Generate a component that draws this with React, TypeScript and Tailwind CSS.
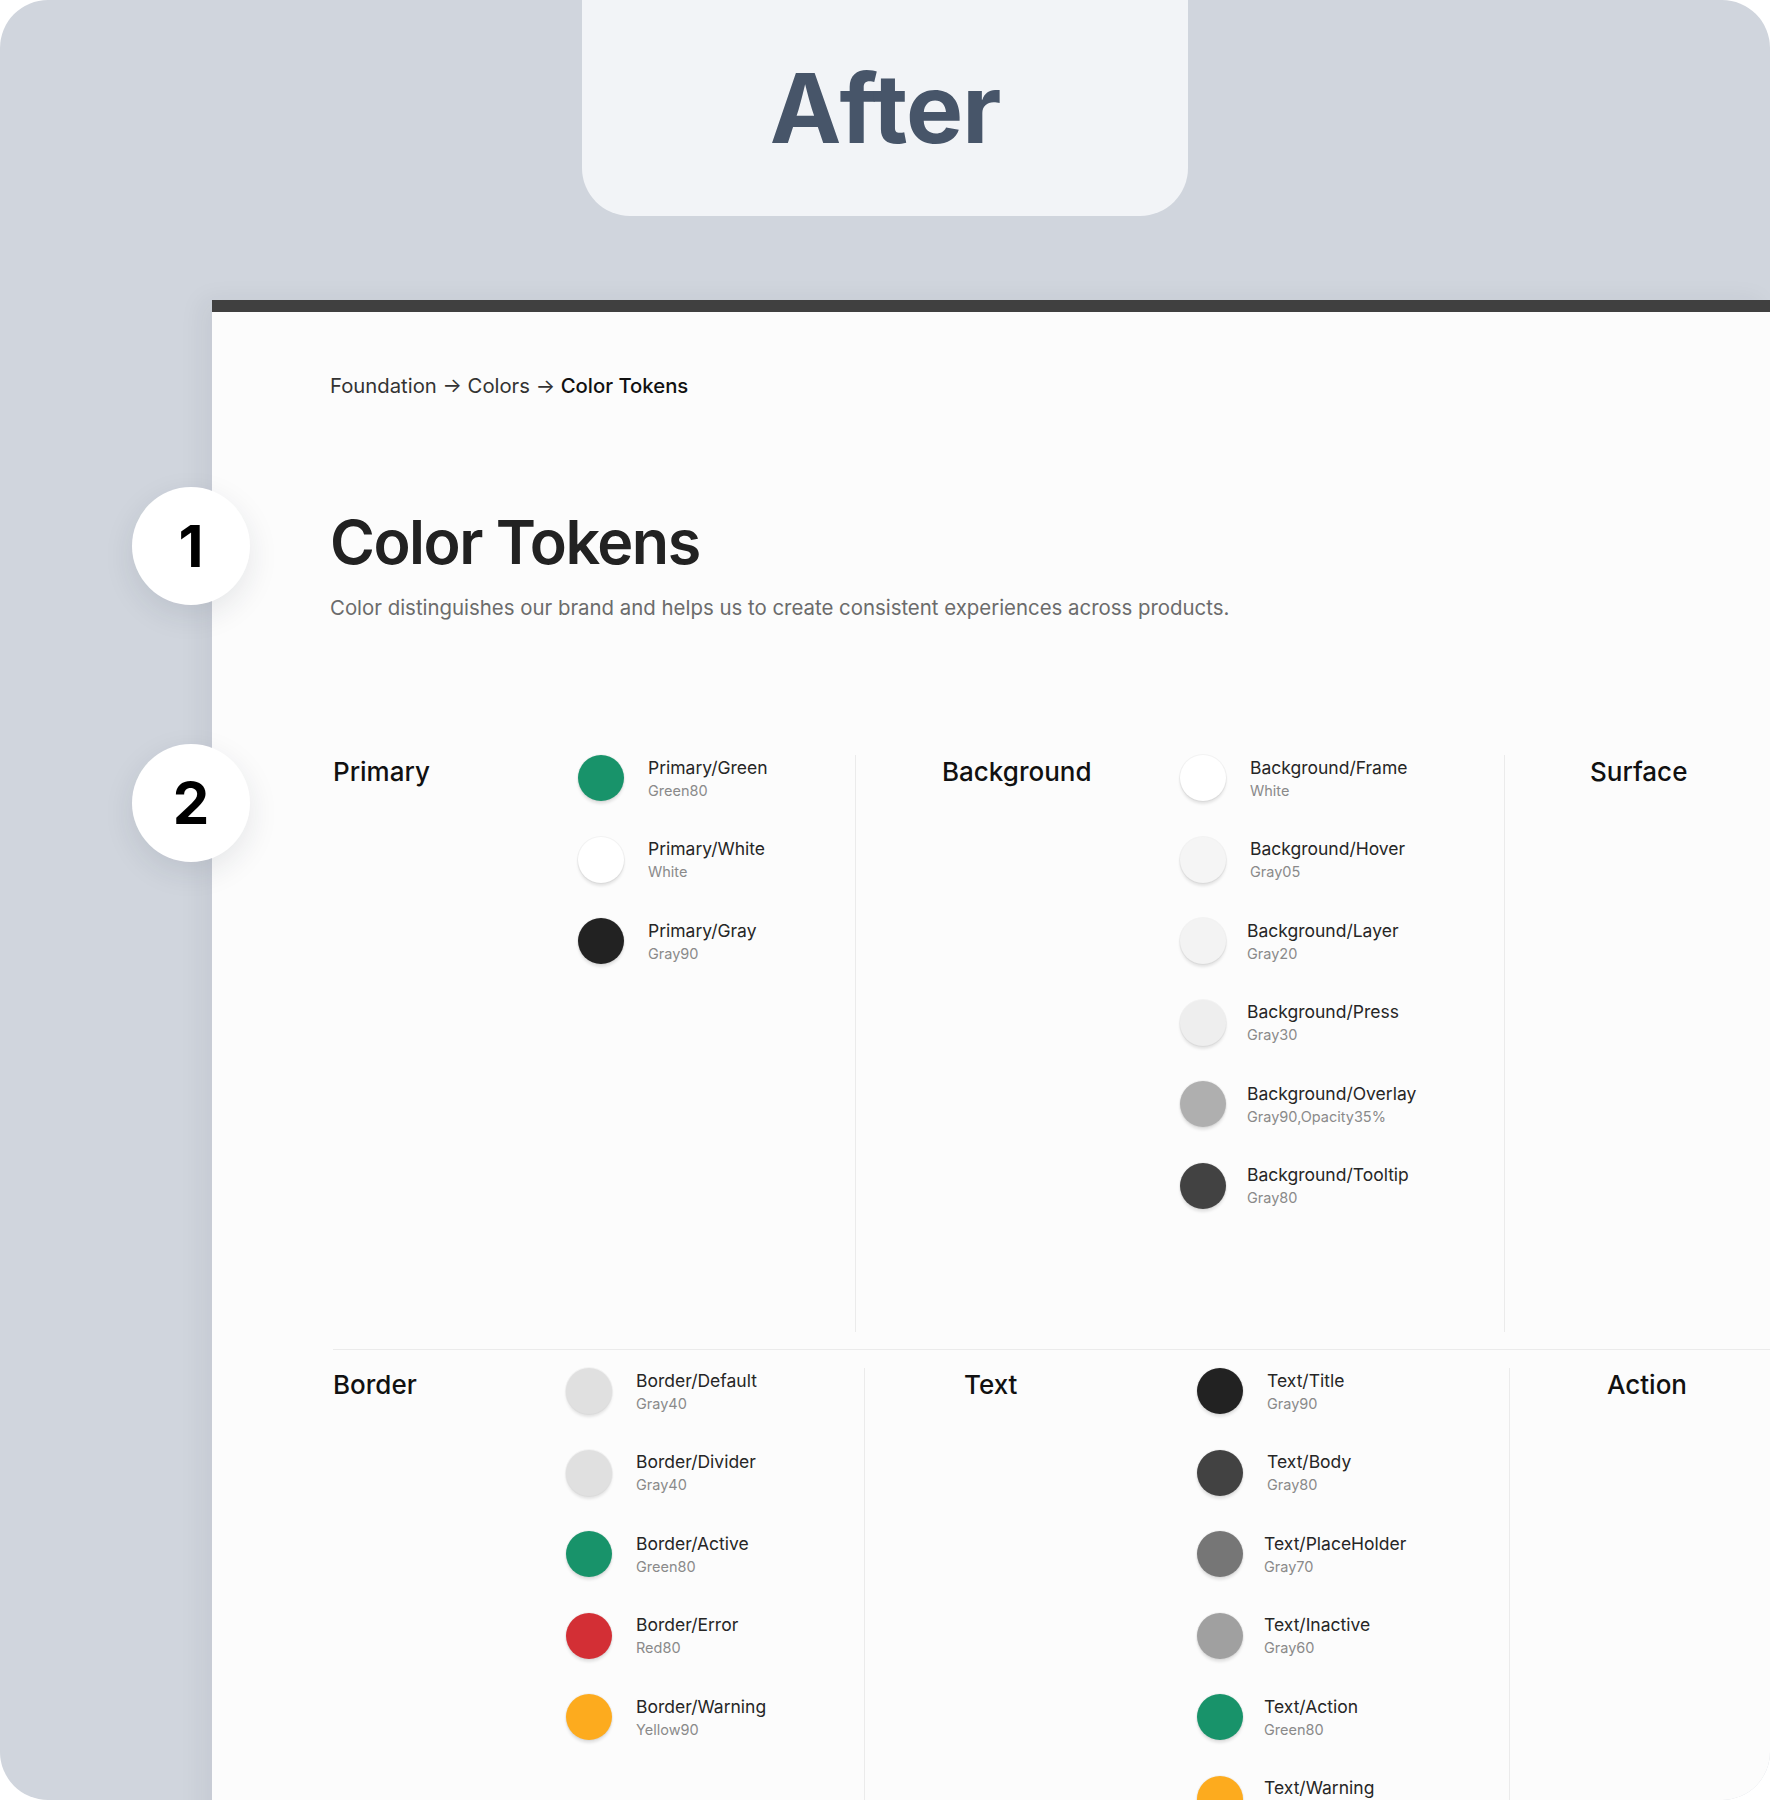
type Token = { name: string; value: string; color: string; gap?: string };

const primary: Token[] = [
  { name: 'Primary/Green', value: 'Green80', color: 'bg-[#18936a]' },
  { name: 'Primary/White', value: 'White', color: 'bg-white' },
  { name: 'Primary/Gray', value: 'Gray90', color: 'bg-[#222222]' },
];

const background: Token[] = [
  { name: 'Background/Frame', value: 'White', color: 'bg-white' },
  { name: 'Background/Hover', value: 'Gray05', color: 'bg-[#f5f5f5]' },
  { name: 'Background/Layer', value: 'Gray20', color: 'bg-[#f3f3f3]', gap: 'gap-[21px]' },
  { name: 'Background/Press', value: 'Gray30', color: 'bg-[#eeeeee]', gap: 'gap-[21px]' },
  { name: 'Background/Overlay', value: 'Gray90,Opacity35%', color: 'bg-[#afafaf]', gap: 'gap-[21px]' },
  { name: 'Background/Tooltip', value: 'Gray80', color: 'bg-[#424242]', gap: 'gap-[21px]' },
];

const border: Token[] = [
  { name: 'Border/Default', value: 'Gray40', color: 'bg-[#e0e0e0]' },
  { name: 'Border/Divider', value: 'Gray40', color: 'bg-[#e0e0e0]' },
  { name: 'Border/Active', value: 'Green80', color: 'bg-[#18936a]' },
  { name: 'Border/Error', value: 'Red80', color: 'bg-[#d32f35]' },
  { name: 'Border/Warning', value: 'Yellow90', color: 'bg-[#fdab1e]' },
];

const text: Token[] = [
  { name: 'Text/Title', value: 'Gray90', color: 'bg-[#222222]' },
  { name: 'Text/Body', value: 'Gray80', color: 'bg-[#424242]' },
  { name: 'Text/PlaceHolder', value: 'Gray70', color: 'bg-[#767676]', gap: 'gap-[21px]' },
  { name: 'Text/Inactive', value: 'Gray60', color: 'bg-[#a0a0a0]', gap: 'gap-[21px]' },
  { name: 'Text/Action', value: 'Green80', color: 'bg-[#18936a]', gap: 'gap-[21px]' },
  { name: 'Text/Warning', value: 'Yellow90', color: 'bg-[#fdab1e]', gap: 'gap-[21px]' },
];

function Swatch({ t }: { t: Token }) {
  return (
    <div className={`flex h-[46px] items-center ${t.gap ?? 'gap-6'}`}>
      <div
        className={`h-[46px] w-[46px] shrink-0 rounded-full ${t.color} shadow-[0_0_0_1px_rgba(0,0,0,0.04),0_3px_3px_rgba(0,0,0,0.1)]`}
      />
      <div className="flex flex-col gap-[2px] pt-[1px]">
        <span className="text-[17.5px] leading-[22px] text-[#262626]">{t.name}</span>
        <span className="text-[14.5px] leading-[20px] text-[#8a8a8a]">{t.value}</span>
      </div>
    </div>
  );
}

function SwatchList({ items }: { items: Token[] }) {
  return (
    <div className="flex flex-col gap-[35.5px]">
      {items.map((t) => (
        <Swatch key={t.name} t={t} />
      ))}
    </div>
  );
}

function Heading({ children }: { children: string }) {
  return <h3 className="mt-[1px] text-[26px] font-medium leading-[32px] text-[#111]">{children}</h3>;
}

function Badge({ n }: { n: number }) {
  return (
    <div className="flex h-[118px] w-[118px] items-center justify-center rounded-full bg-white shadow-[0_10px_30px_rgba(30,41,59,0.10)]">
      <span className="text-[58px] font-bold leading-none text-black">{n}</span>
    </div>
  );
}

export default function App() {
  return (
    <div className="h-[1800px] w-[1770px] overflow-hidden bg-white" style={{ fontFamily: 'Inter, "Noto Sans", sans-serif' }}>
      <div className="relative flex h-full flex-col overflow-hidden rounded-[48px] bg-[#d0d5dd]">
        {/* tab */}
        <div className="mx-auto flex h-[216px] w-[606px] shrink-0 items-center justify-center rounded-b-[48px] bg-[#f2f4f7]">
          <span className="text-[96px] font-bold leading-none tracking-[-1px] text-[#475569]">After</span>
        </div>

        {/* page */}
        <div className="ml-[212px] mt-[84px] flex-1 border-t-[12px] border-[#404040] bg-[#fcfcfc] shadow-[-10px_0_24px_rgba(30,41,59,0.06)]">
          <div className="pl-[118px] pt-[60px]">
            <p className="text-[20.3px] leading-[28px] text-[#333]">
              Foundation → Colors → <span className="font-medium text-[#111]">Color Tokens</span>
            </p>
            <h1 className="mt-[112px] text-[61px] font-semibold leading-[61px] tracking-[-1.5px] text-[#222]">
              Color Tokens
            </h1>
            <p className="mt-[21px] text-[20.4px] leading-[28px] text-[#6b6b6b]">
              Color distinguishes our brand and helps us to create consistent experiences across products.
            </p>
          </div>

          {/* row 1 */}
          <div className="mt-[133px] pl-[121px]">
            <div className="flex h-[577px]">
              <div className="flex w-[522px] shrink-0">
                <div className="w-[245px] shrink-0">
                  <Heading>Primary</Heading>
                </div>
                <SwatchList items={primary} />
              </div>
              <div className="flex w-[649px] shrink-0 border-l border-[#ebebeb]">
                <div className="w-[324px] shrink-0 pl-[86px]">
                  <Heading>Background</Heading>
                </div>
                <SwatchList items={background} />
              </div>
              <div className="flex-1 border-l border-[#ebebeb] pl-[85px]">
                <Heading>Surface</Heading>
              </div>
            </div>

            {/* row 2 */}
            <div className="mt-[17px] border-t border-[#ebebeb] pt-[18px]">
              <div className="flex h-[600px]">
                <div className="flex w-[531px] shrink-0">
                  <div className="w-[233px] shrink-0">
                    <Heading>Border</Heading>
                  </div>
                  <SwatchList items={border} />
                </div>
                <div className="flex w-[645px] shrink-0 border-l border-[#ebebeb]">
                  <div className="w-[332px] shrink-0 pl-[99px]">
                    <Heading>Text</Heading>
                  </div>
                  <SwatchList items={text} />
                </div>
                <div className="flex-1 border-l border-[#ebebeb] pl-[97px]">
                  <Heading>Action</Heading>
                </div>
              </div>
            </div>
          </div>
        </div>

        {/* step markers */}
        <div className="absolute left-[132px] top-[487px]">
          <Badge n={1} />
        </div>
        <div className="absolute left-[132px] top-[744px]">
          <Badge n={2} />
        </div>
      </div>
    </div>
  );
}
